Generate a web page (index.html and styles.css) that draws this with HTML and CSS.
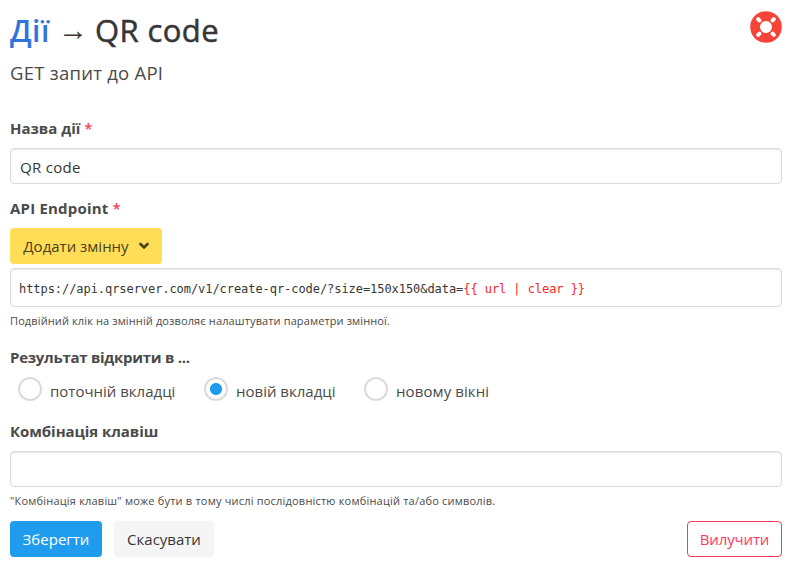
FILE: index.html
```html
<!DOCTYPE html>
<html lang="uk">
<head>
<meta charset="utf-8">
<title>QR code</title>
<link rel="stylesheet" href="styles.css">
</head>
<body>
<header class="header">
  <div>
    <h1 class="title"><a class="title-link">Дії</a><span class="arrow">→</span><span class="title-name">QR code</span></h1>
    <p class="subtitle">GET запит до API</p>
  </div>
  <svg class="help" viewBox="0 0 32 32" width="32" height="32">
    <circle cx="16" cy="16" r="10.9" fill="none" stroke="#f54437" stroke-width="9.8"/>
    <path d="M8.200 8.200l1.200 1.200M23.800 8.200l-1.200 1.200M8.200 23.800l1.200-1.200M23.800 23.800l-1.200-1.200" stroke="#fff" stroke-width="4" stroke-linecap="round"/>
  </svg>
</header>
<form class="form">
  <div class="field">
    <div class="label"><span>Назва дії</span> <span class="required">*</span></div>
    <div class="input"><span class="t-value">QR code</span></div>
  </div>
  <div class="field">
    <div class="label"><span class="t-endpoint">API Endpoint</span> <span class="required">*</span></div>
    <button type="button" class="button button-warning"><span>Додати змінну</span><svg width="10" height="8" viewBox="0 0 10 8"><path d="M1.500 2l3.500 3.500L8.500 2" fill="none" stroke="#4a4019" stroke-width="2.600" stroke-linecap="round"/></svg></button>
    <div class="input editor"><code>https://api.qrserver.com/v1/create-qr-code/?size=150x150&amp;data=<span class="variable">{{ url | clear }}</span></code></div>
    <p class="note t-note1">Подвійний клік на змінній дозволяє налаштувати параметри змінної.</p>
  </div>
  <div class="field">
    <div class="label"><span class="t-result">Результат відкрити в ...</span></div>
    <div class="radios">
      <label class="radio"><span class="dot"></span><span>поточній вкладці</span></label>
      <label class="radio"><span class="dot checked"></span><span>новій вкладці</span></label>
      <label class="radio"><span class="dot"></span><span class="t-win">новому вікні</span></label>
    </div>
  </div>
  <div class="field field-last">
    <div class="label"><span class="t-keys">Комбінація клавіш</span></div>
    <div class="input"></div>
    <p class="note t-note2">"Комбінація клавіш" може бути в тому числі послідовністю комбінацій та/або символів.</p>
  </div>
  <div class="actions">
    <button type="button" class="button button-primary">Зберегти</button>
    <button type="button" class="button button-light">Скасувати</button>
    <button type="button" class="button button-danger">Вилучити</button>
  </div>
</form>
</body>
</html>
```

FILE: styles.css
```css
* { box-sizing: border-box; }
body {
  margin: 0;
  padding: 10px 9px 0 10px;
  background: #fff;
  color: #4a4a4a;
  font: 15px/24px "Open Sans", "Noto Sans", sans-serif;
  white-space: nowrap;
}
h1, p { margin: 0; font-weight: 400; }
.header { display: flex; justify-content: space-between; height: 106px; }
.help { margin-top: 1px; }
.title { display: flex; height: 42px; font-size: 30px; line-height: 42px; color: #363636; }
.title-link { width: 48px; color: #3273dc; font-weight: 600; letter-spacing: .4px; }
.arrow { width: 37px; font-family: "Liberation Sans", sans-serif; font-size: 30px; line-height: 39px; }
.title-name { font-size: 31px; line-height: 41px; letter-spacing: .4px; -webkit-text-stroke: .5px #363636; }
.subtitle { margin-top: 8px; font-size: 18.5px; line-height: 26px; letter-spacing: .25px; }
.field { margin-bottom: 12px; }
.field-last { margin-bottom: 11px; }
.label { height: 24px; margin-bottom: 8px; font-weight: 700; color: #4a4a4a; }
.required { color: #ff3860; font-weight: 600; }
.t-endpoint { letter-spacing: .2px; }
.t-result { letter-spacing: -.27px; }
.t-keys { letter-spacing: -.06px; }
.t-value { letter-spacing: .3px; }
.t-win { letter-spacing: .1px; }
.input {
  display: flex;
  align-items: center;
  height: 36px;
  padding: 2px 9px 0;
  border: 1px solid #dbdbdb;
  border-radius: 4px;
  box-shadow: inset 0 1px 2px rgba(10, 10, 10, .1);
  color: #363636;
}
.editor { height: 39px; margin-top: 4px; padding: 2px 8px 0; }
code { font: 12px/18px "DejaVu Sans Mono", monospace; letter-spacing: -.06px; }
.variable { color: #f22; }
.note { height: 18px; margin-top: 5px; font-size: 11px; line-height: 18px; }
.t-note1 { margin-bottom: 15px; letter-spacing: .12px; }
.t-note2 { letter-spacing: .2px; }
.button {
  display: flex;
  align-items: center;
  justify-content: center;
  height: 36px;
  padding: 0;
  border: 0;
  border-radius: 4px;
  font: inherit;
}
.button-warning { width: 152px; gap: 10px; background: #ffdd57; color: #4a4019; }
.radios { display: flex; height: 30px; padding-left: 8px; }
.radio { display: flex; line-height: 28px; }
.radio:nth-child(1) { width: 186px; }
.radio:nth-child(2) { width: 160px; }
.dot { width: 24px; height: 24px; margin-right: 8px; border: 2px solid #dbdbdb; border-radius: 50%; }
.checked { background: radial-gradient(circle, #209cee 5.6px, #fff 6.4px); }
.actions { display: flex; }
.button-primary { width: 92px; margin-right: 12px; background: #209cee; color: #fff; }
.button-light { width: 100px; background: #f5f5f5; color: #363636; }
.button-danger { width: 95px; margin-left: auto; border: 1px solid #ff3860; background: #fff; color: #ff3860; letter-spacing: -.15px; }
```
